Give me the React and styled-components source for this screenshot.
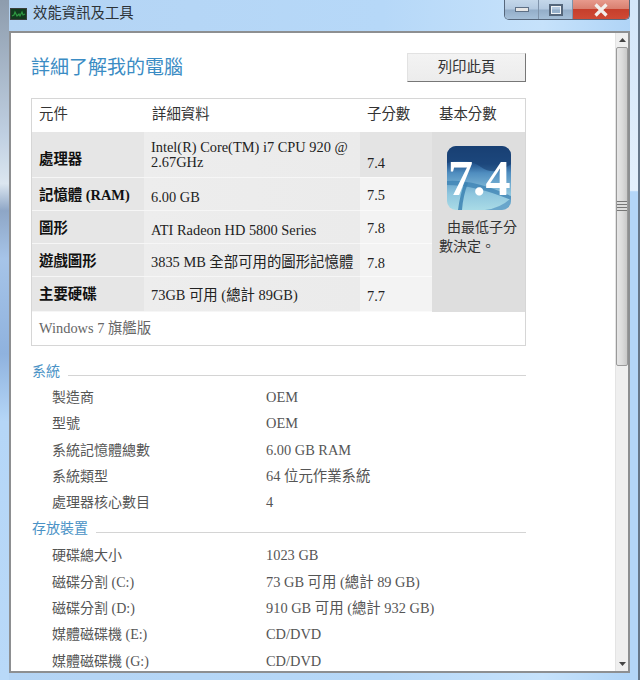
import styled, { createGlobalStyle } from "styled-components";

const GlobalStyle = createGlobalStyle`
  html, body {
    margin: 0;
    padding: 0;
    background: #b9d9f7;
  }
  * {
    box-sizing: border-box;
  }
`;

const serif = `"Liberation Serif", "Noto Sans CJK TC", serif`;

const Window = styled.div`
  width: 640px;
  height: 680px;
  overflow: hidden;
  display: flex;
  flex-direction: column;
  padding: 0 8px 7px 9px;
  font-family: ${serif};
  background:
    linear-gradient(#8d9cad 0, #c0d0e2 20%, #dbe6f0 27%, #8ea6c6 31%, #a6c4e8 38%, #8fb2de 52%, #b5d6f7 62%, #b9d9f8 100%) left / 9px 100% no-repeat,
    linear-gradient(#d3e6fa 0, #e4f0fc 28%, #b4d6f8 28.2%, #b4d6f8 100%) right / 8px 100% no-repeat,
    linear-gradient(90deg, #b4d4f4 0, #b6d8f8 60%, #c6e2fb 85%, #aed3f6 100%);
  border-right: 2px solid #66778a;
`;

const TitleBar = styled.div`
  height: 31px;
  flex: none;
  display: flex;
  align-items: flex-start;
  justify-content: space-between;
`;

const TitleLeft = styled.div`
  display: flex;
  align-items: center;
  gap: 6px;
  height: 27px;
  padding-left: 1px;
`;

const TitleText = styled.span`
  padding-bottom: 5px;
  font-size: 14.4px;
  color: #2c3338;
`;

const Controls = styled.div`
  display: flex;
  height: 20px;
  border: 1px solid #56677c;
  border-top: none;
  border-radius: 0 0 5px 5px;
  overflow: hidden;
`;

const ControlButton = styled.div`
  width: ${({ $w }) => $w}px;
  display: flex;
  align-items: center;
  justify-content: center;
  border-left: ${({ $first }) => ($first ? "none" : "1px solid #7f93aa")};
  background: ${({ $close }) =>
    $close
      ? "linear-gradient(#e79a8c 0, #d98070 45%, #c63f2c 50%, #cf4a35 100%)"
      : "linear-gradient(#c4d7ea 0, #b3c9e0 48%, #93adc8 52%, #a5bfd8 100%)"};
`;

const Panel = styled.div`
  flex: 1;
  min-height: 0;
  display: flex;
  background: #fff;
  border: 2px solid #8d8f91;
`;

const Content = styled.div`
  flex: 1;
  min-width: 0;
  overflow: hidden;
  padding: 19px 0 0 20px;
`;

const Header = styled.div`
  width: 495px;
  display: flex;
  justify-content: space-between;
  align-items: flex-start;
  height: 46px;
`;

const Heading = styled.h1`
  margin: 5px 0 0;
  font-size: 19px;
  line-height: 22px;
  font-weight: 400;
  color: #3b8cc4;
`;

const PrintButton = styled.button`
  width: 119px;
  height: 29px;
  margin-top: 1px;
  padding: 0 0 5px;
  font-family: ${serif};
  font-size: 14.4px;
  color: #333;
  background: linear-gradient(#f3f3f3, #ececec);
  border: 1px solid #e2e2e2;
  border-right: 1px solid #777;
  border-bottom: 1px solid #777;
`;

const ScoreTable = styled.div`
  width: 495px;
  height: 248px;
  border: 1px solid #d6d6d6;
  display: grid;
  grid-template-columns: 112px 216px 72px 1fr;
  grid-template-rows: 33px 46px 33px 33px 33px 35px 1fr;
  color: #222;
`;

const HeadCell = styled.div`
  display: flex;
  align-items: center;
  padding: 0 0 6px ${({ $pad }) => $pad}px;
  font-size: 14.4px;
  color: #333;
`;

const NameCell = styled.div`
  display: flex;
  align-items: center;
  padding: ${({ $top }) => $top || 0}px 0 ${({ $bottom }) => $bottom || 0}px 7px;
  font-size: 14.4px;
  font-weight: 700;
  color: #111;
  background: #e6e6e6;
  border-bottom: 1px solid #f6f6f6;
`;

const DetailCell = styled.div`
  display: flex;
  align-items: center;
  padding: ${({ $top }) => $top || 0}px 4px 0 7px;
  font-size: 14.4px;
  line-height: 15px;
  color: #222;
  background: linear-gradient(90deg, #ededed, #ebebeb);
  border-bottom: 1px solid #f6f6f6;
`;

const ScoreCell = styled.div`
  display: flex;
  align-items: flex-end;
  padding: 0 0 ${({ $bottom }) => $bottom}px 7px;
  font-size: 14.4px;
  color: #222;
  background: ${({ $first }) => ($first ? "#e4e4e4" : "#f3f3f3")};
  border-bottom: 1px solid #fafafa;
`;

const BaseCell = styled.div`
  grid-column: 4;
  grid-row: 2 / 7;
  background: #dedede;
  padding: 14px 6px 0 7px;
  display: flex;
  flex-direction: column;
`;

const Tile = styled.div`
  position: relative;
  width: 64px;
  height: 64px;
  margin-left: 8px;
  border-radius: 9px;
  overflow: hidden;
`;

const TileNumber = styled.span`
  position: absolute;
  top: 4px;
  left: 1px;
  font-size: 50px;
  font-weight: 700;
  line-height: 56px;
  color: #fff;
`;

const BaseNote = styled.p`
  margin: 8px 0 0;
  font-size: 14px;
  line-height: 19px;
  text-indent: 8px;
  color: #333;
`;

const EditionRow = styled.div`
  grid-column: 1 / 5;
  display: flex;
  align-items: center;
  padding: 0 0 4px 7px;
  font-size: 14.4px;
  color: #666;
`;

const SectionTitle = styled.div`
  width: 495px;
  display: flex;
  align-items: center;
  gap: 8px;
  height: 20px;
  margin-top: ${({ $mt }) => $mt}px;
  padding-left: 1px;
  font-size: 14px;
  color: #4a92c6;

  &::after {
    content: "";
    flex: 1;
    align-self: flex-end;
    height: 1px;
    margin-bottom: 4px;
    background: #d4d4d4;
  }
`;

const InfoList = styled.div`
  margin-top: ${({ $mt }) => $mt}px;
`;

const InfoRow = styled.div`
  height: 26.3px;
  display: grid;
  grid-template-columns: 214px 1fr;
  align-items: baseline;
  padding-left: 21px;
  line-height: 26px;
  color: #555;
`;

const InfoLabel = styled.span`
  font-size: 14px;
`;

const InfoValue = styled.span`
  font-size: 14.4px;
`;

const Scrollbar = styled.div`
  width: 13px;
  flex: none;
  display: flex;
  flex-direction: column;
  background: #efefef;
  border-left: 1px solid #e4e4e4;
`;

const ScrollArrow = styled.div`
  height: 14px;
  flex: none;
  display: flex;
  align-items: center;
  justify-content: center;
`;

const ScrollTrack = styled.div`
  flex: 1;
`;

const ScrollThumb = styled.div`
  height: 319px;
  display: flex;
  align-items: flex-start;
  justify-content: center;
  padding-top: 153px;
  background: linear-gradient(90deg, #e6e6e6, #dcdcdc 50%, #c9c9c9);
  border: 1px solid #9a9a9a;
  border-radius: 2px;
`;

const Grip = styled.div`
  width: 10px;
  height: 10px;
  background: repeating-linear-gradient(#777 0, #777 1px, #ddd 1px, #ddd 3px);
`;

const AppIcon = () => (
  <svg width="17" height="12" viewBox="0 0 17 12">
    <rect width="17" height="12" fill="#3a3f3b" />
    <rect x="1" y="1" width="15" height="10" fill="#123a1e" />
    <path d="M2 8l2-1 1-3 2 4 2-2 1 2 2-4 1 3 2-1" fill="none" stroke="#2f9a42" strokeWidth="1.2" />
  </svg>
);

const TileArt = () => (
  <svg width="64" height="64" viewBox="0 0 64 64">
    <defs>
      <linearGradient id="tileBg" x1="0" y1="0" x2="0" y2="1">
        <stop offset="0" stopColor="#1a4379" />
        <stop offset="0.28" stopColor="#24558f" />
        <stop offset="0.42" stopColor="#4f8dbf" />
        <stop offset="0.75" stopColor="#8fc6de" />
        <stop offset="1" stopColor="#a9dbe6" />
      </linearGradient>
    </defs>
    <rect width="64" height="64" fill="url(#tileBg)" />
    <path d="M0 17q20-6 34 4t30-3v-18h-64z" fill="#173d70" opacity="0.6" />
    <path d="M0 35q26-2 64 15v4q-36-15-64-15z" fill="#3c82b3" opacity="0.75" />
    <path d="M11 64q2-16 7-28l3 1q-5 13-6 27z" fill="#3c82b3" opacity="0.85" />
    <path d="M64 52v12h-26q16-2 26-12z" fill="#5b9ac4" opacity="0.8" />
  </svg>
);

const scores = [
  { name: "處理器", detail: "Intel(R) Core(TM) i7 CPU 920 @ 2.67GHz", score: "7.4", first: true, nameTop: 6, scoreBottom: 5 },
  { name: "記憶體 (RAM)", detail: "6.00 GB", score: "7.5", nameBottom: 2, detailTop: 6, scoreBottom: 6 },
  { name: "圖形", detail: "ATI Radeon HD 5800 Series", score: "7.8", nameBottom: 2, detailTop: 6, scoreBottom: 6 },
  { name: "遊戲圖形", detail: "3835 MB 全部可用的圖形記憶體", score: "7.8", nameBottom: 2, detailTop: 4, scoreBottom: 4 },
  { name: "主要硬碟", detail: "73GB 可用 (總計 89GB)", score: "7.7", nameBottom: 4, detailTop: 2, scoreBottom: 6 },
];

const systemRows = [
  ["製造商", "OEM"],
  ["型號", "OEM"],
  ["系統記憶體總數", "6.00 GB RAM"],
  ["系統類型", "64 位元作業系統"],
  ["處理器核心數目", "4"],
];

const storageRows = [
  ["硬碟總大小", "1023 GB"],
  ["磁碟分割 (C:)", "73 GB 可用 (總計 89 GB)"],
  ["磁碟分割 (D:)", "910 GB 可用 (總計 932 GB)"],
  ["媒體磁碟機 (E:)", "CD/DVD"],
  ["媒體磁碟機 (G:)", "CD/DVD"],
];

export default function App() {
  return (
    <>
      <GlobalStyle />
      <Window>
        <TitleBar>
          <TitleLeft>
            <AppIcon />
            <TitleText>效能資訊及工具</TitleText>
          </TitleLeft>
          <Controls>
            <ControlButton $w={33} $first>
              <svg width="14" height="5" viewBox="0 0 14 5">
                <rect x="0.5" y="0.5" width="13" height="4" fill="#e6e6e6" stroke="#5d6f85" />
              </svg>
            </ControlButton>
            <ControlButton $w={34}>
              <svg width="14" height="12" viewBox="0 0 14 12">
                <rect x="1" y="1" width="12" height="10" fill="none" stroke="#55677c" strokeWidth="2" />
                <rect x="2.5" y="2.5" width="9" height="7" fill="none" stroke="#eef2f6" />
              </svg>
            </ControlButton>
            <ControlButton $w={57} $close>
              <svg width="16" height="14" viewBox="0 0 16 14">
                <path d="M2.5 1.5l11 11M13.5 1.5l-11 11" stroke="#f2efec" strokeWidth="3.2" />
              </svg>
            </ControlButton>
          </Controls>
        </TitleBar>
        <Panel>
          <Content>
            <Header>
              <Heading>詳細了解我的電腦</Heading>
              <PrintButton>列印此頁</PrintButton>
            </Header>
            <ScoreTable>
              <HeadCell $pad={7}>元件</HeadCell>
              <HeadCell $pad={8}>詳細資料</HeadCell>
              <HeadCell $pad={7}>子分數</HeadCell>
              <HeadCell $pad={7}>基本分數</HeadCell>
              {scores.map((row) => (
                <div key={row.name} style={{ display: "contents" }}>
                  <NameCell $top={row.nameTop} $bottom={row.nameBottom}>{row.name}</NameCell>
                  <DetailCell $top={row.detailTop}>{row.detail}</DetailCell>
                  <ScoreCell $first={row.first} $bottom={row.scoreBottom}>{row.score}</ScoreCell>
                </div>
              ))}
              <BaseCell>
                <Tile>
                  <TileArt />
                  <TileNumber>7.4</TileNumber>
                </Tile>
                <BaseNote>由最低子分數決定。</BaseNote>
              </BaseCell>
              <EditionRow>Windows 7 旗艦版</EditionRow>
            </ScoreTable>
            <SectionTitle $mt={14}>系統</SectionTitle>
            <InfoList $mt={4}>
              {systemRows.map(([label, value]) => (
                <InfoRow key={label}>
                  <InfoLabel>{label}</InfoLabel>
                  <InfoValue>{value}</InfoValue>
                </InfoRow>
              ))}
            </InfoList>
            <SectionTitle $mt={2}>存放裝置</SectionTitle>
            <InfoList $mt={5}>
              {storageRows.map(([label, value]) => (
                <InfoRow key={label}>
                  <InfoLabel>{label}</InfoLabel>
                  <InfoValue>{value}</InfoValue>
                </InfoRow>
              ))}
            </InfoList>
          </Content>
          <Scrollbar>
            <ScrollArrow>
              <svg width="7" height="4" viewBox="0 0 7 4">
                <path d="M0 4l3.5-4 3.5 4z" fill="#444" />
              </svg>
            </ScrollArrow>
            <ScrollThumb>
              <Grip />
            </ScrollThumb>
            <ScrollTrack />
            <ScrollArrow>
              <svg width="7" height="4" viewBox="0 0 7 4">
                <path d="M0 0l3.5 4 3.5-4z" fill="#444" />
              </svg>
            </ScrollArrow>
          </Scrollbar>
        </Panel>
      </Window>
    </>
  );
}
